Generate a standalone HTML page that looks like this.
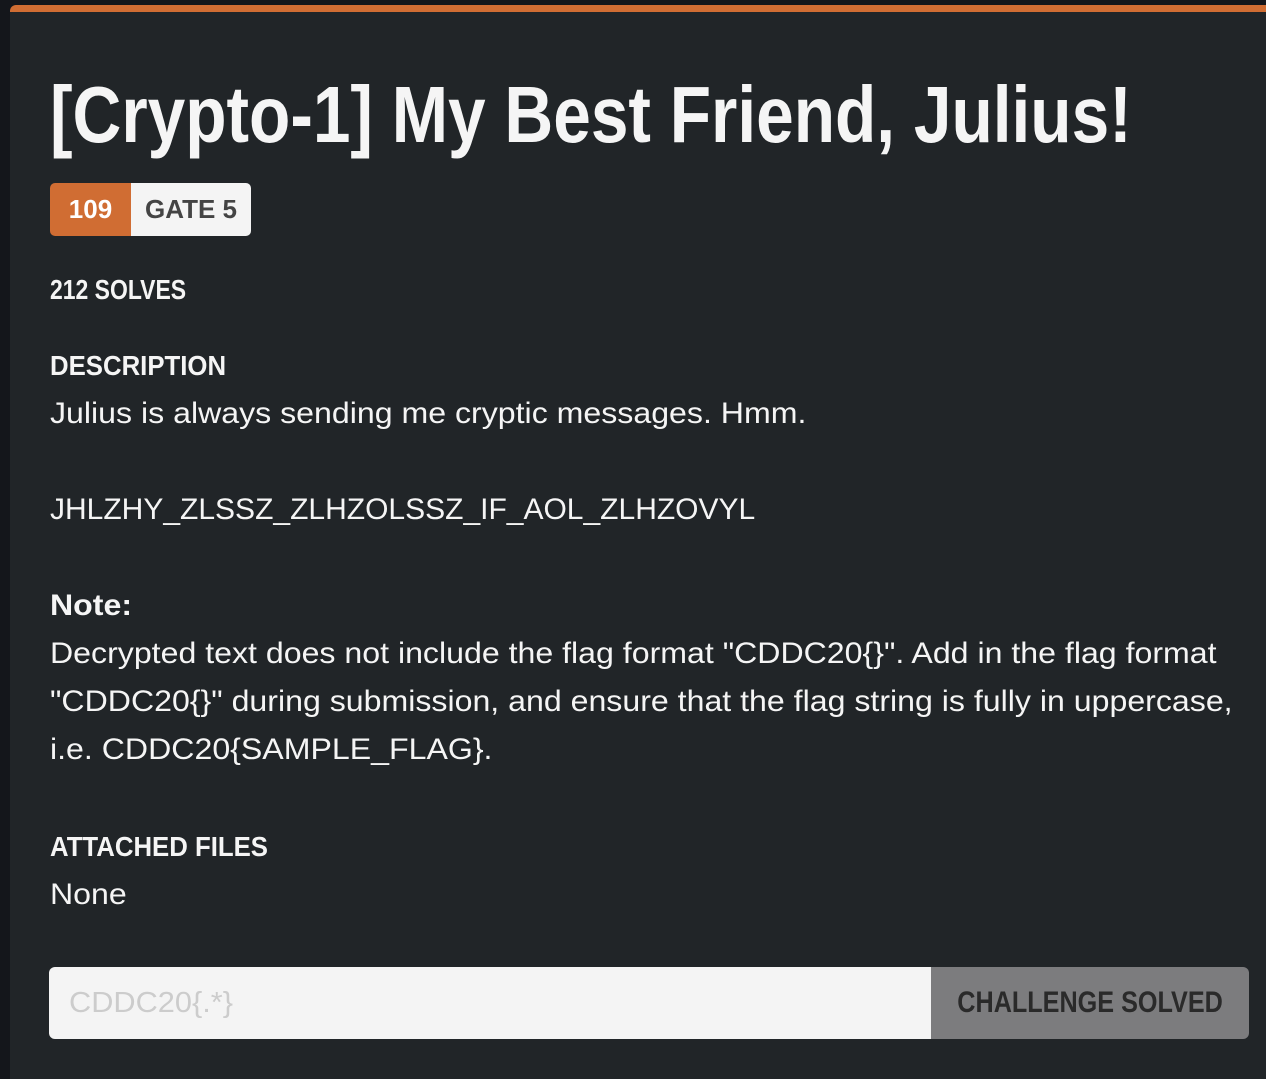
<!DOCTYPE html>
<html><head><meta charset="utf-8"><style>
html,body{margin:0;padding:0;width:1266px;height:1079px;overflow:hidden;background:#14161b;font-family:"Liberation Sans",sans-serif;color:#f5f5f5}
.modal{position:absolute;left:10px;top:5px;width:1256px;height:1074px;background:#212528;border-top:7px solid #d06d33;border-top-left-radius:6px;box-sizing:border-box}
.c{position:absolute;left:40px;white-space:nowrap}
.n{display:inline-block;transform-origin:0 0}
.title{top:53px;font-size:80px;font-weight:bold;line-height:100px}
.title .n{transform:scaleX(0.845)}
.badge{top:171px;height:53px;display:flex;border-radius:5px;overflow:hidden;font-weight:bold;font-size:26px}
.badge .a{background:#d06d33;width:81px;color:#fff;display:flex;align-items:center;justify-content:center}
.badge .b{background:#f4f4f4;width:120px;color:#444;display:flex;align-items:center;justify-content:center}
.h{font-weight:bold;font-size:28px}
.h .n{transform:scaleX(0.92)}
.t{font-size:30px}
.t .n{transform:scaleX(1.07)}
.inp{position:absolute;left:39px;top:955px;width:882px;height:72px;background:#f4f4f4;border-radius:6px 0 0 6px;color:#ccc;font-size:29px;line-height:72px;padding-left:20px;box-sizing:border-box}
.btn{position:absolute;left:921px;top:955px;width:318px;height:72px;background:#7c7c7e;border-radius:0 6px 6px 0;color:#2a2a2a;font-weight:bold;font-size:30px;line-height:72px;text-align:center}
.btn .n{transform:scaleX(0.84);transform-origin:50% 0}
</style></head><body>
<div class="modal">
<div class="c title"><span class="n">[Crypto-1] My Best Friend, Julius!</span></div>
<div class="c badge"><div class="a">109</div><div class="b">GATE 5</div></div>
<div class="c h" style="top:262px"><span class="n" style="transform:scaleX(0.82)">212 SOLVES</span></div>
<div class="c h" style="top:338px"><span class="n">DESCRIPTION</span></div>
<div class="c t" style="top:385px"><span class="n">Julius is always sending me cryptic messages. Hmm.</span></div>
<div class="c t" style="top:481px"><span class="n" style="transform:scaleX(1.0)">JHLZHY_ZLSSZ_ZLHZOLSSZ_IF_AOL_ZLHZOVYL</span></div>
<div class="c t" style="top:577px;font-weight:bold"><span class="n">Note:</span></div>
<div class="c t" style="top:625px"><span class="n">Decrypted text does not include the flag format "CDDC20{}". Add in the flag format</span></div>
<div class="c t" style="top:673px"><span class="n">"CDDC20{}" during submission, and ensure that the flag string is fully in uppercase,</span></div>
<div class="c t" style="top:721px"><span class="n">i.e. CDDC20{SAMPLE_FLAG}.</span></div>
<div class="c h" style="top:819px"><span class="n">ATTACHED FILES</span></div>
<div class="c t" style="top:866px"><span class="n">None</span></div>
<div class="inp"><span class="n" style="transform:scaleX(1.06)">CDDC20{.*}</span></div>
<div class="btn"><span class="n">CHALLENGE SOLVED</span></div>
</div>
</body></html>
